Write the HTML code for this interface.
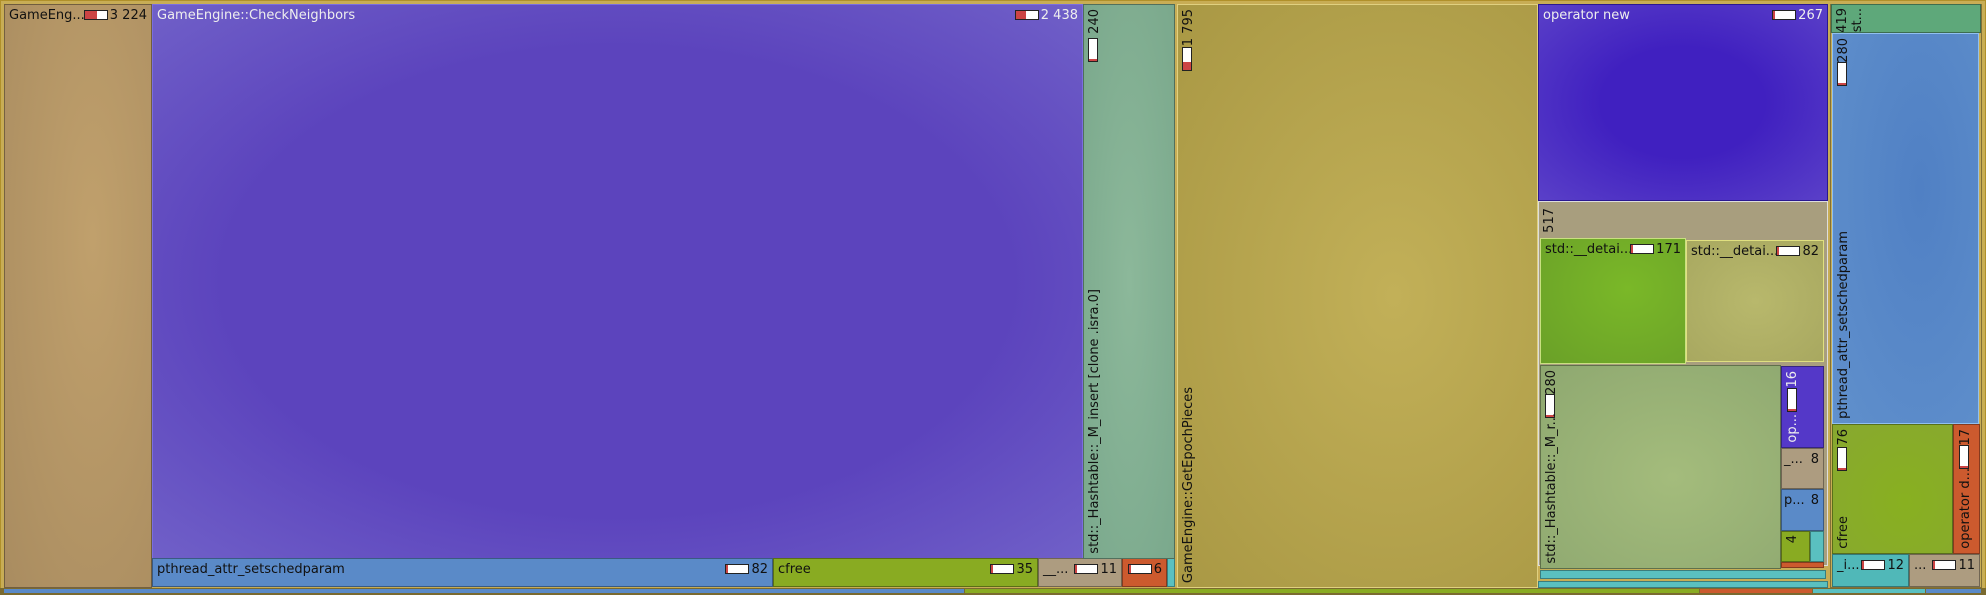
<!DOCTYPE html>
<html><head><meta charset="utf-8"><style>
html,body{margin:0;padding:0}
body{width:1986px;height:595px;position:relative;overflow:hidden;background:#c9ad4e;font-family:"DejaVu Sans","Liberation Sans",sans-serif;font-size:13px;color:#111}
.b{position:absolute;box-sizing:border-box;border:1px solid rgba(0,0,0,.35);overflow:hidden}
.t{position:absolute;left:4px;top:3px;white-space:nowrap}
.n{position:absolute;right:4px;top:3px;white-space:nowrap}
.v{position:absolute;writing-mode:vertical-rl;transform:rotate(180deg);white-space:nowrap}
.bar{display:inline-block;width:22px;height:8px;background:#fff;border:1px solid #222;vertical-align:-1px;margin-right:2px;box-shadow:inset 2px 0 0 #c44}
.vbar{position:absolute;width:8px;height:22px;background:#fff;border:1px solid #222;box-shadow:inset 0 -2px 0 #c44}
.w{color:#eee}
</style></head><body>
<div class="b" style="left:0;top:0;width:1986px;height:590px;background:#c8ad55;border-color:#b0902a"></div>
<div class="b" style="left:4px;top:4px;width:148px;height:584px;background:radial-gradient(ellipse at 60% 40%,#c0a06c,#a98c60)"><span class="t">GameEng...</span><span class="n"><span class="bar" style="box-shadow:inset 12px 0 0 #c44"></span>3 224</span></div>
<div class="b" style="left:152px;top:4px;width:931px;height:555px;background:radial-gradient(ellipse at 50% 50%,#5c44bd 60%,#7060c8);border-color:#7a6ee0"><span class="t w">GameEngine::CheckNeighbors</span><span class="n w"><span class="bar" style="box-shadow:inset 10px 0 0 #c44"></span>2 438</span></div>
<div class="b" style="left:152px;top:558px;width:621px;height:29px;background:#5a8ac8"><span class="t">pthread_attr_setschedparam</span><span class="n"><span class="bar"></span>82</span></div>
<div class="b" style="left:773px;top:558px;width:265px;height:29px;background:#89ab22"><span class="t">cfree</span><span class="n"><span class="bar"></span>35</span></div>
<div class="b" style="left:1038px;top:558px;width:84px;height:29px;background:#ad9c80"><span class="t">__...</span><span class="n"><span class="bar"></span>11</span></div>
<div class="b" style="left:1122px;top:558px;width:45px;height:29px;background:#cc5a2e"><span class="n"><span class="bar"></span>6</span></div>
<div class="b" style="left:1167px;top:558px;width:8px;height:29px;background:#5ac0c0"></div>
<div class="b" style="left:1083px;top:4px;width:92px;height:555px;background:radial-gradient(ellipse at 50% 50%,#8cb89a,#7aa88c)"><span class="v" style="left:3px;top:4px">240</span><span class="vbar" style="left:4px;top:33px"></span><span class="v" style="left:3px;bottom:4px">std::_Hashtable::_M_insert [clone .isra.0]</span></div>
<div class="b" style="left:1177px;top:4px;width:361px;height:584px;background:radial-gradient(ellipse at 60% 50%,#c2b058,#a99844);border-color:#e0d080"><span class="v" style="left:3px;top:4px">1 795</span><span class="vbar" style="left:4px;top:42px;box-shadow:inset 0 -8px 0 #c44"></span><span class="v" style="left:3px;bottom:4px">GameEngine::GetEpochPieces</span></div>
<div class="b" style="left:1538px;top:4px;width:290px;height:197px;background:radial-gradient(ellipse at 50% 50%,#4020c0 40%,#5a40c8);border-color:#2a1890"><span class="t w">operator new</span><span class="n w"><span class="bar"></span>267</span></div>
<div class="b" style="left:1538px;top:201px;width:290px;height:365px;background:#a89e7e;border-color:#ddd"><span class="v" style="left:3px;top:6px">517</span></div>
<div class="b" style="left:1540px;top:238px;width:146px;height:126px;background:radial-gradient(ellipse at 60% 40%,#7ab828,#6aa028);border-color:#c8e080"><span class="t">std::__detai...</span><span class="n"><span class="bar"></span>171</span></div>
<div class="b" style="left:1686px;top:240px;width:138px;height:122px;background:radial-gradient(ellipse at 50% 50%,#b8b86c,#a8a860);border-color:#e0e080"><span class="t">std::__detai...</span><span class="n"><span class="bar"></span>82</span></div>
<div class="b" style="left:1540px;top:365px;width:241px;height:204px;background:radial-gradient(ellipse at 55% 55%,#a4bc7c,#8ea870)"><span class="v" style="left:3px;top:4px">280</span><span class="vbar" style="left:4px;top:28px"></span><span class="v" style="left:3px;bottom:4px">std::_Hashtable::_M_r...</span></div>
<div class="b" style="left:1781px;top:366px;width:43px;height:82px;background:#5438c8"><span class="v w" style="left:3px;top:4px">16</span><span class="vbar" style="left:5px;top:21px"></span><span class="v w" style="left:3px;bottom:4px">op...</span></div>
<div class="b" style="left:1781px;top:448px;width:43px;height:41px;background:#ad9c80"><span class="t" style="left:2px">_...</span><span class="n">8</span></div>
<div class="b" style="left:1781px;top:489px;width:43px;height:42px;background:#5a8ac8"><span class="t" style="left:2px">p...</span><span class="n">8</span></div>
<div class="b" style="left:1781px;top:531px;width:29px;height:31px;background:#89ab22"><span class="v" style="left:3px;top:3px">4</span></div>
<div class="b" style="left:1810px;top:531px;width:14px;height:31px;background:#5ac0c0"></div>
<div class="b" style="left:1781px;top:562px;width:43px;height:6px;background:#cc5a2e"></div>
<div class="b" style="left:1540px;top:570px;width:286px;height:9px;background:#5ac0c0"></div>
<div class="b" style="left:1538px;top:581px;width:290px;height:7px;background:#5ac0c0"></div>
<div class="b" style="left:1830px;top:4px;width:152px;height:584px;background:#c8ad55"></div>
<div class="b" style="left:1831px;top:4px;width:150px;height:29px;background:#5ea87a"><span class="v" style="left:3px;top:3px">419</span><span class="v" style="left:18px;top:3px">st...</span></div>
<div class="b" style="left:1832px;top:33px;width:147px;height:391px;background:radial-gradient(ellipse at 60% 40%,#5080c4,#6090cc);border-color:#90c0f0"><span class="v" style="left:3px;top:4px">280</span><span class="vbar" style="left:4px;top:28px"></span><span class="v" style="left:3px;bottom:4px">pthread_attr_setschedparam</span></div>
<div class="b" style="left:1832px;top:424px;width:121px;height:130px;background:radial-gradient(ellipse at 60% 60%,#88b020,#88a830)"><span class="v" style="left:3px;top:4px">76</span><span class="vbar" style="left:4px;top:22px"></span><span class="v" style="left:3px;bottom:4px">cfree</span></div>
<div class="b" style="left:1953px;top:424px;width:27px;height:130px;background:#cc5a2e"><span class="v" style="left:4px;top:4px">17</span><span class="vbar" style="left:5px;top:20px"></span><span class="v" style="left:4px;bottom:4px">operator d...</span></div>
<div class="b" style="left:1832px;top:554px;width:77px;height:33px;background:#50b8b8"><span class="t">_i...</span><span class="n"><span class="bar"></span>12</span></div>
<div class="b" style="left:1909px;top:554px;width:71px;height:33px;background:#ad9c80"><span class="t">...</span><span class="n"><span class="bar"></span>11</span></div>
<div style="position:absolute;left:0;top:588px;width:1986px;height:7px;background:#7a6a30"></div>
<div style="position:absolute;left:4px;top:589px;width:960px;height:4px;background:#5a8ac8"></div>
<div style="position:absolute;left:965px;top:589px;width:734px;height:4px;background:#89ab22"></div>
<div style="position:absolute;left:1700px;top:589px;width:112px;height:4px;background:#cc5a2e"></div>
<div style="position:absolute;left:1813px;top:589px;width:112px;height:4px;background:#5ac0c0"></div>
<div style="position:absolute;left:1926px;top:589px;width:55px;height:4px;background:#5a8ac8"></div>
</body></html>
